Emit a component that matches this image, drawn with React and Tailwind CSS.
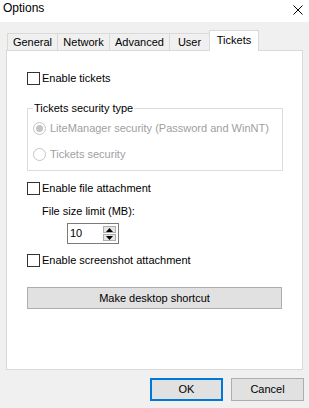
import { useState } from 'react';

function CheckRow({ label, mt }) {
  return (
    <div className={`flex h-[13px] items-center gap-[2px] ${mt}`}>
      <span className="h-[13px] w-[13px] shrink-0 border border-[#333333] bg-white" />
      <span className="leading-[13px] text-black">{label}</span>
    </div>
  );
}

function RadioRow({ label, checked, mt }) {
  return (
    <div className={`flex h-[16px] items-center gap-[4px] pl-[5px] ${mt}`}>
      <svg width="13" height="13" viewBox="0 0 13 13">
        <circle cx="6.5" cy="6.5" r="6" fill="white" stroke="#c4c4c4" />
        {checked && <circle cx="6.5" cy="6.5" r="3.5" fill="#c4c4c4" />}
      </svg>
      <span className="leading-[16px] text-[#a0a0a0]">{label}</span>
    </div>
  );
}

const tabs = [
  { name: 'General', w: 'w-[51px]' },
  { name: 'Network', w: 'w-[53px] -ml-px' },
  { name: 'Advanced', w: 'w-[61px] -ml-px' },
  { name: 'User', w: 'w-[41px] -ml-px' },
];

export default function App() {
  const [size] = useState('10');

  return (
    <div className="flex h-[408px] w-[309px] flex-col bg-[#f0f0f0] font-['Liberation_Sans',Arial,sans-serif] text-[11px] text-black">
      {/* title bar */}
      <div className="flex h-[22px] items-start justify-between bg-white pl-[3px] pr-[6px]">
        <span className="pt-[1px] text-[12px] leading-[15px]">Options</span>
        <svg className="mt-[5px]" width="10" height="10" viewBox="0 0 10 10">
          <path d="M0.5 0.5 L9.5 9.5 M9.5 0.5 L0.5 9.5" stroke="#000" strokeWidth="1" />
        </svg>
      </div>

      {/* tabs */}
      <div className="mt-[8px] flex items-end pl-[7px]">
        {tabs.map((t) => (
          <div
            key={t.name}
            className={`flex h-[17px] items-center justify-center border-x border-t border-[#d9d9d9] bg-[#f0f0f0] ${t.w}`}
          >
            {t.name}
          </div>
        ))}
        <div className="relative z-10 -mb-px -ml-px flex h-[21px] w-[50px] items-center justify-center border-x border-t border-[#d9d9d9] bg-white pb-[1px]">
          Tickets
        </div>
      </div>

      {/* panel */}
      <div className="ml-[6px] flex h-[320px] w-[297px] flex-col border border-[#d9d9d9] bg-white pl-[20px] pt-[21px]">
        <CheckRow label="Enable tickets" mt="" />

        <div className="relative mt-[23px] w-[256px] border border-[#dcdcdc]">
          <span className="absolute -top-[8px] left-[5px] bg-white px-[1px] leading-[15px] text-black">
            Tickets security type
          </span>
          <RadioRow label="LiteManager security (Password and WinNT)" checked mt="mt-[11px]" />
          <RadioRow label="Tickets security" mt="mt-[10px]" />
          <div className="h-[8px]" />
        </div>

        <CheckRow label="Enable file attachment" mt="mt-[11px]" />

        <div className="mt-[9px] ml-[15px] h-[15px] leading-[15px]">File size limit (MB):</div>

        <div className="mt-[4px] ml-[40px] flex h-[21px] w-[52px] items-center justify-between border border-[#7a7a7a] bg-white pl-[2px] pr-[2px]">
          <span className="leading-[15px]">{size}</span>
          <div className="flex flex-col gap-[1px]">
            <div className="flex h-[7px] w-[13px] items-center justify-center border border-[#adadad] bg-[#e5e5e5]">
              <svg width="7" height="4" viewBox="0 0 7 4">
                <path d="M3.5 0 L7 4 L0 4 Z" fill="#000" />
              </svg>
            </div>
            <div className="flex h-[7px] w-[13px] items-center justify-center border border-[#adadad] bg-[#e5e5e5]">
              <svg width="7" height="4" viewBox="0 0 7 4">
                <path d="M0 0 L7 0 L3.5 4 Z" fill="#000" />
              </svg>
            </div>
          </div>
        </div>

        <CheckRow label="Enable screenshot attachment" mt="mt-[10px]" />

        <button className="mt-[20px] flex h-[22px] w-[255px] items-center justify-center border border-[#adadad] bg-[#e1e1e1]">
          Make desktop shortcut
        </button>
      </div>

      {/* footer buttons */}
      <div className="mt-[8px] flex justify-end gap-[8px] pr-[5px]">
        <button className="flex h-[23px] w-[73px] items-center justify-center border-2 border-[#0078d7] bg-[#e1e1e1]">
          OK
        </button>
        <button className="flex h-[23px] w-[73px] items-center justify-center border border-[#adadad] bg-[#e1e1e1]">
          Cancel
        </button>
      </div>
    </div>
  );
}
